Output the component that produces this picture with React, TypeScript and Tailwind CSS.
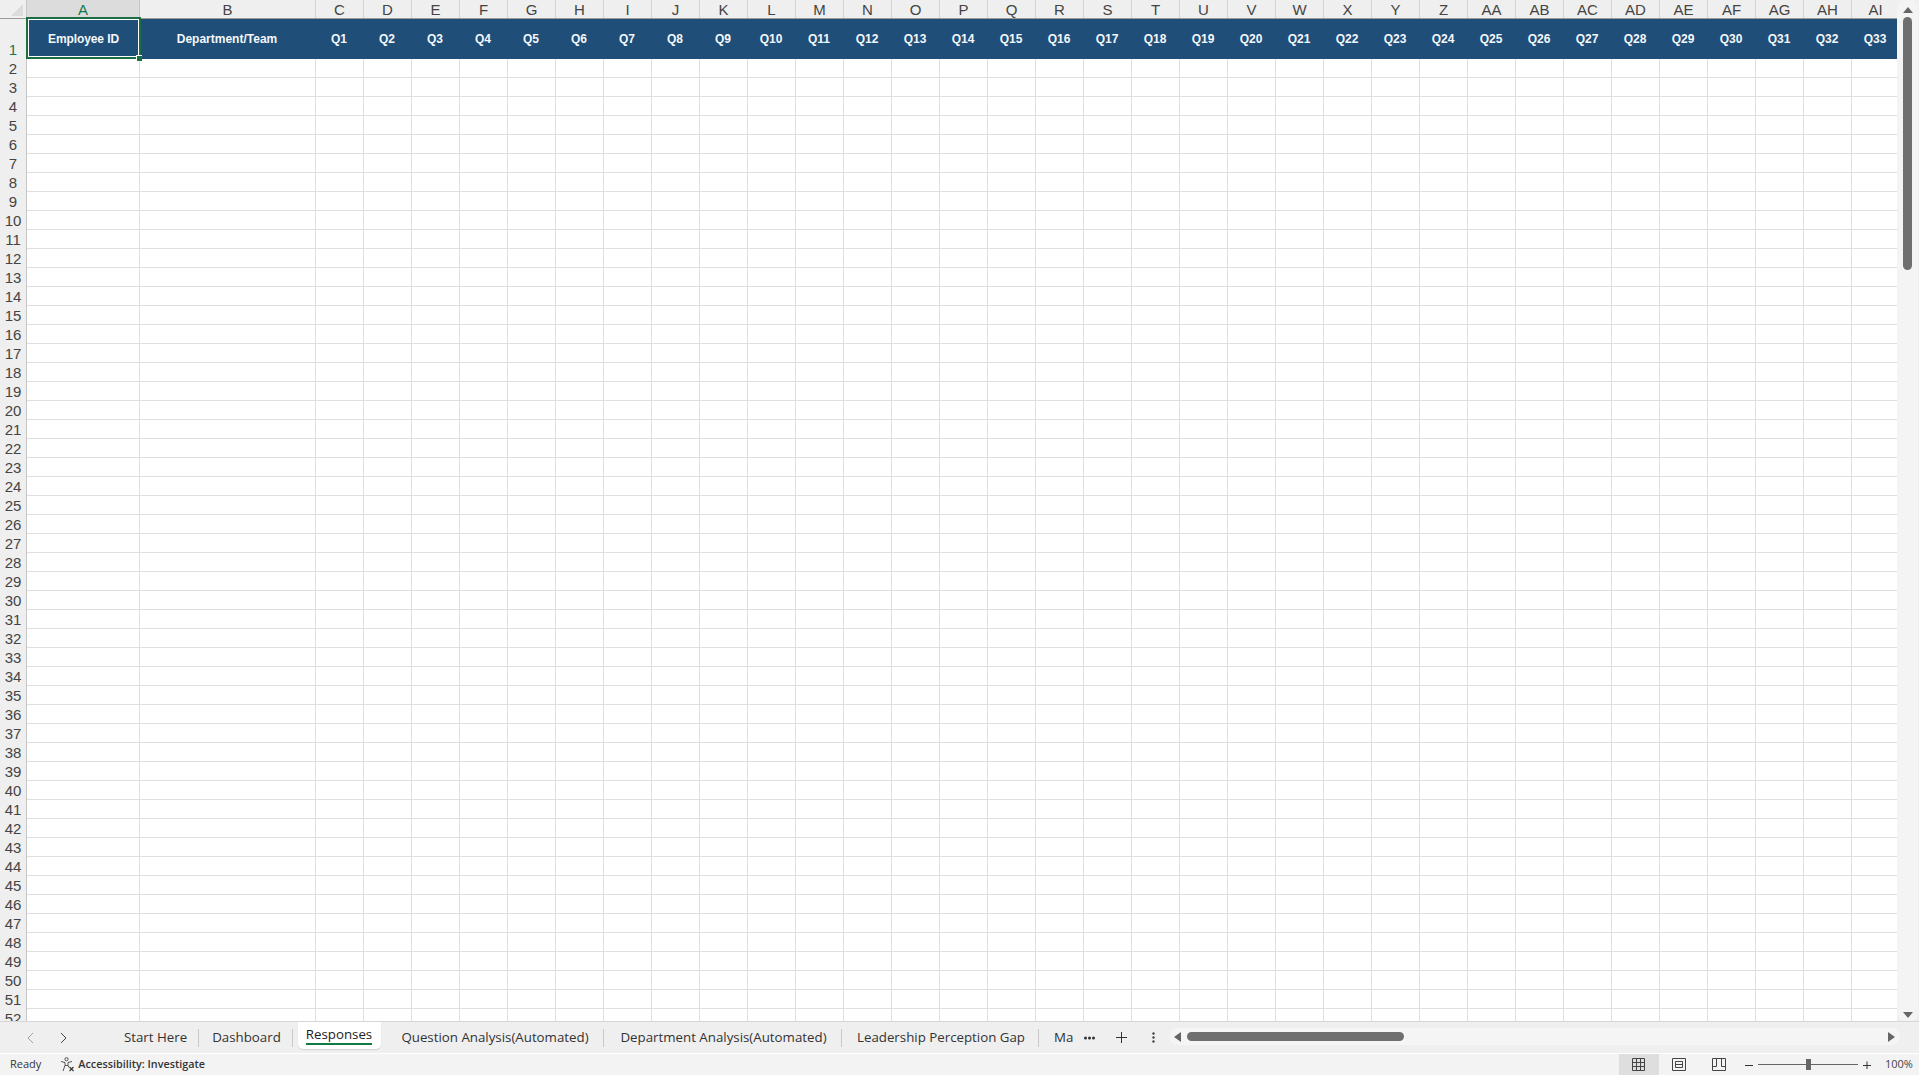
const headerFont = "font-['Liberation_Sans',Arial,sans-serif]";
const uiFont = "font-['Open_Sans','Noto_Sans',sans-serif]";

const columnNames = (() => {
  const names: string[] = [];
  for (let i = 0; i < 35; i++) {
    names.push(i < 26 ? String.fromCharCode(65 + i) : 'A' + String.fromCharCode(65 + i - 26));
  }
  return names;
})();

const columnWidth = (i: number) => (i === 0 ? 113 : i === 1 ? 176 : 48);
const rowNumbers = Array.from({ length: 52 }, (_, i) => i + 1);

const headerLabel = (i: number) =>
  i === 0 ? 'Employee ID' : i === 1 ? 'Department/Team' : `Q${i - 1}`;

const tabs = [
  { label: 'Start Here', width: 'w-[88px]' },
  { label: 'Dashboard', width: 'w-[94px]' },
  { label: 'Responses', width: 'w-[92px]', active: true },
  { label: 'Question Analysis(Automated)', width: 'w-[219px]' },
  { label: 'Department Analysis(Automated)', width: 'w-[238px]' },
  { label: 'Leadership Perception Gap', width: 'w-[197px]' },
];

const ColumnHeaders = () => (
  <div className={`flex h-[18px] shrink-0 bg-[#efefef] text-[15px] leading-[19px] text-[#444] ${headerFont}`}>
    <div className="relative w-[27px] shrink-0 border-r border-[#c6c6c6]">
      <div className="absolute bottom-[2px] right-[3px] h-0 w-0 border-b-[12px] border-l-[12px] border-b-[#dcdcdc] border-l-transparent" />
    </div>
    {columnNames.map((name, i) => (
      <div
        key={name}
        style={{ width: columnWidth(i) }}
        className={`shrink-0 border-r text-center ${
          i === 0
            ? 'border-[#c6c6c6] bg-[#dcdcdc] text-[#17794a]'
            : 'border-[#d4d4d4]'
        }`}
      >
        {name}
      </div>
    ))}
  </div>
);

const HeaderRow = () => (
  <div className="flex h-[41px] bg-[#1f4e79] border-t border-[#9b9b9b]">
    <div className="flex w-[27px] shrink-0 items-end justify-center border-r border-[#c6c6c6] bg-[#efefef] pb-[1px] text-[15px] leading-[17px] text-[#17794a]">
      1
    </div>
    {columnNames.map((_, i) => (
      <div
        key={i}
        style={{ width: columnWidth(i) }}
        className={`flex shrink-0 items-center justify-center text-[12px] font-bold text-[#f4f7fa] ${i === 0 ? 'tracking-[-0.1px]' : 'pr-[2px]'}`}
      >
        {headerLabel(i)}
      </div>
    ))}
  </div>
);

const Row = ({ n }: { n: number }) => (
  <div className="flex h-[19px] shrink-0">
    <div className="w-[27px] shrink-0 border-r border-[#c6c6c6] bg-[#efefef] pt-[1px] text-center text-[15px] leading-[18px] text-[#444]">
      {n}
    </div>
    {columnNames.map((_, i) => (
      <div
        key={i}
        style={{ width: columnWidth(i) }}
        className="shrink-0 border-r border-b border-[#dfdfdf]"
      />
    ))}
  </div>
);

const SelectedCell = () => (
  <div className="absolute left-[26px] top-[17px] h-[42px] w-[115px] border-2 border-[#1d6d42]">
    <div className="h-full w-full border border-white" />
    <div className="absolute -bottom-[4px] -right-[3px] h-[6px] w-[6px] border-l border-t border-white bg-[#1d6d42]" />
  </div>
);

const Sheet = () => (
  <div className="flex min-h-0 flex-1 bg-white">
    <div className={`relative min-w-0 flex-1 overflow-hidden ${headerFont}`}>
      <ColumnHeaders />
      <HeaderRow />
      {rowNumbers.slice(1).map((n) => (
        <Row key={n} n={n} />
      ))}
      <SelectedCell />
    </div>
    <div className="flex w-[22px] shrink-0 bg-[#efefef]">
      <div className="flex w-[21px] flex-col items-center rounded-[8px] bg-[#f4f4f4] pt-[7px]">
        <div className="h-0 w-0 border-x-[5px] border-b-[6px] border-x-transparent border-b-[#666]" />
        <div className="mt-[4px] h-[253px] w-[9px] rounded-full bg-[#6f6f6f]" />
        <div className="mt-auto mb-[3px] h-0 w-0 border-x-[5px] border-t-[6px] border-x-transparent border-t-[#666]" />
      </div>
    </div>
  </div>
);

const TabBar = () => (
  <div className={`flex h-[32px] shrink-0 items-stretch border-t border-[#d6d6d6] bg-[#efefef] text-[13.3px] text-[#333] ${uiFont}`}>
    <div className="flex w-[111px] shrink-0 items-center pl-[25px] text-[#444]">
      <svg width="12" height="12" viewBox="0 0 12 12" fill="none" stroke="#a0a0a0" strokeWidth="1">
        <path d="M8 1 3 6l5 5" />
      </svg>
      <svg className="ml-[20px]" width="12" height="12" viewBox="0 0 12 12" fill="none" stroke="#444" strokeWidth="1">
        <path d="M4 1l5 5-5 5" />
      </svg>
    </div>
    {tabs.map((tab) => (
      <div key={tab.label} className={`relative flex shrink-0 items-center justify-center ${tab.width}`}>
        {tab.active ? (
          <div className="flex h-[27px] w-[83px] -translate-y-[2px] flex-col items-center justify-center rounded-b-[5px] bg-white font-medium text-[#222] shadow-[0_1px_1px_rgba(0,0,0,0.12)]">
            <span className="-mt-[1px] border-b-2 border-[#107c41] leading-[18px]">{tab.label}</span>
          </div>
        ) : (
          <div className="flex h-[18px] w-full items-center justify-center border-r border-[#c8c8c8] pl-[2px]">
            {tab.label}
          </div>
        )}
      </div>
    ))}
    <div className="flex w-[45px] shrink-0 items-center pl-[15px]">Ma</div>
    <div className="flex w-[11px] shrink-0 items-center justify-center">
      <svg width="11" height="4" viewBox="0 0 11 4" fill="#333">
        <circle cx="1.5" cy="2" r="1.5" />
        <circle cx="5.5" cy="2" r="1.5" />
        <circle cx="9.5" cy="2" r="1.5" />
      </svg>
    </div>
    <div className="ml-[21px] flex w-[11px] shrink-0 items-center justify-center">
      <svg width="11" height="11" viewBox="0 0 11 11" fill="none" stroke="#333" strokeWidth="1">
        <path d="M5.5 0v11M0 5.5h11" />
      </svg>
    </div>
    <div className="ml-[25px] flex w-[3px] shrink-0 items-center justify-center">
      <svg width="3" height="11" viewBox="0 0 3 11" fill="#444">
        <circle cx="1.5" cy="1.5" r="1.2" />
        <circle cx="1.5" cy="5.5" r="1.2" />
        <circle cx="1.5" cy="9.5" r="1.2" />
      </svg>
    </div>
    <div className="mt-[6px] mb-[8px] ml-[14px] flex flex-1 items-center rounded-full bg-[#f5f5f5] pl-[5px] pr-[5px]">
      <div className="h-0 w-0 border-y-[5px] border-r-[7px] border-y-transparent border-r-[#666]" />
      <div className="ml-[6px] h-[9px] w-[217px] rounded-full bg-[#6f6f6f]" />
      <div className="ml-auto h-0 w-0 border-y-[5px] border-l-[7px] border-y-transparent border-l-[#666]" />
    </div>
    <div className="w-[19px] shrink-0" />
  </div>
);

const AccessibilityIcon = () => (
  <svg width="15" height="15" viewBox="0 0 15 15" fill="none" stroke="#444" strokeWidth="0.9">
    <circle cx="6.5" cy="2.2" r="1.6" />
    <path d="M1 4.5l4 1v3L3 14M12 4.5l-4 1v3l1 2M5 8.5h3" />
    <path d="M9.5 10l4 4M13.5 10l-4 4" stroke="#333" strokeWidth="1.1" />
  </svg>
);

const StatusBar = () => (
  <div className={`flex h-[22px] shrink-0 items-center border-t border-white bg-[#f3f3f3] text-[11px] text-[#333] ${uiFont}`}>
    <span className="ml-[10px]">Ready</span>
    <span className="ml-[19px] flex items-center gap-[3px] text-[10.8px] font-semibold">
      <AccessibilityIcon />
      Accessibility: Investigate
    </span>
    <div className="ml-auto flex h-full items-stretch">
      <div className="flex w-[40px] items-center justify-center bg-[#dedede] pr-[1px]">
        <svg width="13" height="13" viewBox="0 0 13 13" fill="none" stroke="#444">
          <path d="M.5.5h12v12H.5zM.5 4.5h12M.5 8.5h12M4.5.5v12M8.5.5v12" />
        </svg>
      </div>
      <div className="flex w-[40px] items-center justify-center">
        <svg width="14" height="13" viewBox="0 0 14 13" fill="none" stroke="#444">
          <path d="M.5.5h13v12H.5zM3.5 3.5h7v6h-7zM3.5 6.5h7" />
        </svg>
      </div>
      <div className="flex w-[40px] items-center justify-center">
        <svg width="14" height="13" viewBox="0 0 14 13" fill="none" stroke="#444">
          <path d="M.5.5h13v12H.5zM.5 8.5h4V.5M9.5.5v8h4" />
        </svg>
      </div>
      <div className="ml-[6px] flex items-center">
        <svg width="8" height="8" viewBox="0 0 8 8" stroke="#333">
          <path d="M0 4.5h8" />
        </svg>
        <div className="relative ml-[5px] h-px w-[100px] bg-[#666]">
          <div className="absolute left-[48px] -top-[5px] h-[11px] w-[5px] bg-[#666]" />
        </div>
        <svg className="ml-[5px]" width="8" height="8" viewBox="0 0 8 8" stroke="#333">
          <path d="M0 4.5h8M4 .5v8" />
        </svg>
      </div>
      <span className="ml-[14px] mr-[8px] flex w-[26px] items-center text-[#444]">100%</span>
    </div>
  </div>
);

export default function App() {
  return (
    <div className="flex h-[1075px] w-[1919px] flex-col overflow-hidden bg-white">
      <Sheet />
      <TabBar />
      <StatusBar />
    </div>
  );
}
